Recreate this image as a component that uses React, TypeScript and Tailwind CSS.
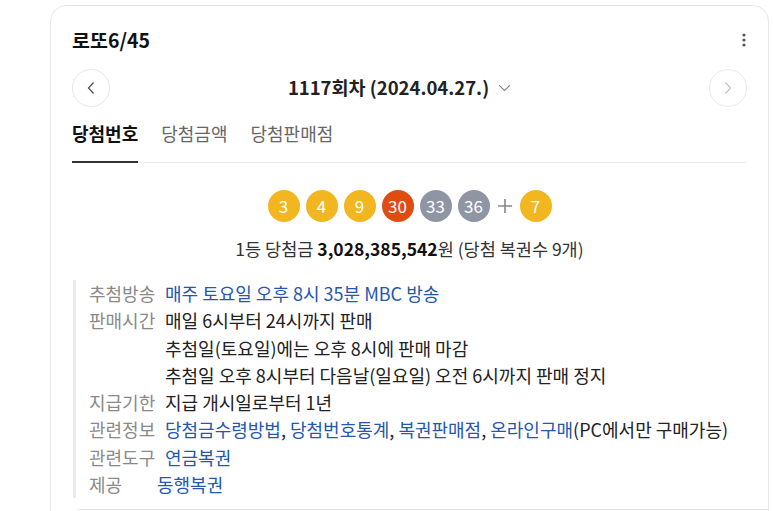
import type { ReactNode } from "react";

type Ball = { n: number; color: string };

const balls: Ball[] = [
  { n: 3, color: "bg-[#f2b720]" },
  { n: 4, color: "bg-[#f2b720]" },
  { n: 9, color: "bg-[#f2b720]" },
  { n: 30, color: "bg-[#de4c12]" },
  { n: 33, color: "bg-[#9095a4]" },
  { n: 36, color: "bg-[#9095a4]" },
];

const font = { fontFamily: '"Noto Sans CJK KR", "Noto Sans", sans-serif' };

function Link({ children }: { children: ReactNode }) {
  return <span className="text-[#2457ad]">{children}</span>;
}

function Row({
  label,
  wide = true,
  children,
}: {
  label: string;
  wide?: boolean;
  children: ReactNode;
}) {
  return (
    <div className="flex">
      <span className={`${wide ? "w-[76px]" : "w-[68px]"} shrink-0 text-[#8a8a8a]`}>
        {label}
      </span>
      <div className="text-[#222]">{children}</div>
    </div>
  );
}

function LottoBall({ n, color }: Ball) {
  return (
    <span
      className={`flex h-[32px] w-[32px] items-center justify-center rounded-full text-[17px] text-white ${color}`}
    >
      {n}
    </span>
  );
}

export default function App() {
  return (
    <div
      className="h-[511px] w-[773px] overflow-hidden bg-white pl-[50px] pr-[4px] pt-[5px]"
      style={font}
    >
      <section className="rounded-[16px] border border-[#e6e6e6] px-[21px] pb-[30px] pt-[22px]">
        <div className="flex h-[24px] items-center justify-between">
          <h1 className="text-[19.5px] font-bold leading-[24px] text-[#111]">로또6/45</h1>
          <svg width="4" height="14" viewBox="0 0 4 14" className="mr-[1px] fill-[#555]">
            <circle cx="2" cy="2" r="1.6" />
            <circle cx="2" cy="7" r="1.6" />
            <circle cx="2" cy="12" r="1.6" />
          </svg>
        </div>

        <div className="mt-[17px] flex h-[38px] items-center">
          <button className="flex h-[38px] w-[38px] shrink-0 items-center justify-center rounded-full border border-[#e8e8e8]">
            <svg width="8" height="14" viewBox="0 0 8 14" fill="none" stroke="#555" strokeWidth="1.3">
              <path d="M6.5 1.5 1.5 7l5 5.5" />
            </svg>
          </button>
          <div className="flex flex-1 items-center justify-center gap-[9px] pr-[20px]">
            <span className="text-[18.5px] font-semibold text-[#222]">
              1117회차 (2024.04.27.)
            </span>
            <svg width="13" height="8" viewBox="0 0 13 8" fill="none" stroke="#888" strokeWidth="1.1">
              <path d="M1 1.2 6.5 6.5 12 1.2" />
            </svg>
          </div>
          <button className="flex h-[38px] w-[38px] shrink-0 items-center justify-center rounded-full border border-[#ececec]">
            <svg width="8" height="14" viewBox="0 0 8 14" fill="none" stroke="#c4c4c4" strokeWidth="1.3">
              <path d="M1.5 1.5 6.5 7l-5 5.5" />
            </svg>
          </button>
        </div>

        <nav className="mt-[12px] flex gap-[23px] border-b border-[#ececec] text-[18px] leading-[28px]">
          <span className="-mb-px border-b-2 border-[#333] pb-[14px] font-bold text-[#111]">
            당첨번호
          </span>
          <span className="pb-[14px] text-[#666]">당첨금액</span>
          <span className="pb-[14px] text-[#666]">당첨판매점</span>
        </nav>

        <div className="mt-[27px] flex items-center justify-center gap-[6px]">
          {balls.map((b) => (
            <LottoBall key={b.n} {...b} />
          ))}
          <svg width="16" height="16" viewBox="0 0 16 16" stroke="#888" strokeWidth="1.6" className="mx-[1px]">
            <path d="M8 1v14M1 8h14" />
          </svg>
          <LottoBall n={7} color="bg-[#f2b720]" />
        </div>

        <p className="mt-[15px] text-center text-[17.5px] leading-[24px] text-[#333]">
          1등 당첨금 <b className="font-bold text-[#111]">3,028,385,542</b>원 (당첨 복권수 9개)
        </p>

        <div className="mt-[19px] ml-[1px] border-l-[3px] border-[#ebebeb] pl-[13px] text-[18px] leading-[27.3px]">
          <Row label="추첨방송">
            <Link>매주 토요일 오후 8시 35분 MBC 방송</Link>
          </Row>
          <Row label="판매시간">
            <div>매일 6시부터 24시까지 판매</div>
            <div>추첨일(토요일)에는 오후 8시에 판매 마감</div>
            <div>추첨일 오후 8시부터 다음날(일요일) 오전 6시까지 판매 정지</div>
          </Row>
          <Row label="지급기한">지급 개시일로부터 1년</Row>
          <Row label="관련정보">
            <Link>당첨금수령방법</Link>, <Link>당첨번호통계</Link>, <Link>복권판매점</Link>,{" "}
            <Link>온라인구매</Link>(PC에서만 구매가능)
          </Row>
          <Row label="관련도구">
            <Link>연금복권</Link>
          </Row>
          <Row label="제공" wide={false}>
            <Link>동행복권</Link>
          </Row>
        </div>

        <div className="-mr-[21px] ml-[6px] mt-[11px] border-t border-[#e6e6e6]" />
      </section>
    </div>
  );
}
